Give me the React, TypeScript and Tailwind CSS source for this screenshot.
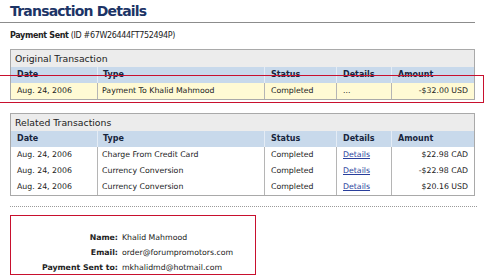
const font = { fontFamily: '"DejaVu Sans", Verdana, sans-serif' };

type Row = { date: string; type: string; status: string; details: string; amount: string; link?: boolean };

const original: Row[] = [
    { date: 'Aug. 24, 2006', type: 'Payment To Khalid Mahmood', status: 'Completed', details: '...', amount: '-$32.00 USD' },
];

const related: Row[] = [
    { date: 'Aug. 24, 2006', type: 'Charge From Credit Card', status: 'Completed', details: 'Details', amount: '$22.98 CAD', link: true },
    { date: 'Aug. 24, 2006', type: 'Currency Conversion', status: 'Completed', details: 'Details', amount: '-$22.98 CAD', link: true },
    { date: 'Aug. 24, 2006', type: 'Currency Conversion', status: 'Completed', details: 'Details', amount: '$20.16 USD', link: true },
];

const grid = 'grid grid-cols-[87px_167px_72px_55px_82px]';

function TxTable(props: { title: string; rows: Row[]; rowBg: string }) {
    return (
        <div className="ml-[10px] w-[465px] border border-[#a9a9a9]">
            <div className="h-[17px] bg-[#ececec] pl-[4px] text-[9.3px] leading-[17px] text-[#222]">{props.title}</div>
            <div className={`${grid} h-[16px] bg-[#c8d9eb] text-[8px] font-bold leading-[16px] text-[#17253d]`}>
                <div className="border-r border-[#e4ecf5] pl-[6px]">Date</div>
                <div className="border-r border-[#e4ecf5] pl-[5px]">Type</div>
                <div className="border-r border-[#e4ecf5] pl-[6px]">Status</div>
                <div className="border-r border-[#e4ecf5] pl-[6px]">Details</div>
                <div className="pl-[6px]">Amount</div>
            </div>
            {props.rows.map((r, i) => (
                <div key={i} className={`${grid} h-[16px] text-[7.8px] leading-[16px] text-[#222] ${props.rowBg}`}>
                    <div className="border-r border-[#b5b5b5] pl-[6px]">{r.date}</div>
                    <div className="border-r border-[#b5b5b5] pl-[4px]">{r.type}</div>
                    <div className="border-r border-[#b5b5b5] pl-[6px]">{r.status}</div>
                    <div className="border-r border-[#b5b5b5] pl-[6px]">
                        {r.link ? <span className="text-[#2a3f9c] underline">{r.details}</span> : r.details}
                    </div>
                    <div className="pr-[6px] text-right">{r.amount}</div>
                </div>
            ))}
        </div>
    );
}

export default function App() {
    return (
        <div className="relative h-[280px] w-[489px] overflow-hidden bg-white" style={font}>
            <h1 className="h-[22px] pl-[10px] pt-[1px] text-[14px] font-bold leading-[20px] tracking-[-0.8px] text-[#1c3466]">
                Transaction Details
            </h1>
            <div className="h-px w-[475px] bg-[#8c8c8c]" />
            <div className="mt-[8px] pl-[10px] text-[8px] leading-[10px] tracking-[-0.35px] text-[#222]">
                <span className="font-bold">Payment Sent</span> (ID #67W26444FT752494P)
            </div>
            <div className="mt-[8px]">
                <TxTable title="Original Transaction" rows={original} rowBg="bg-[#fffad4]" />
            </div>
            <div className="mt-[13px]">
                <TxTable title="Related Transactions" rows={related} rowBg="bg-white" />
            </div>
            <div className="ml-[10px] mt-[10px] w-[467px] border-t border-dotted border-[#9a9a9a]" />
            <div className="ml-[10px] mt-[8px] h-[60px] w-[246px] border border-[#c8102e] pt-[14px] text-[7.8px] leading-[15px] text-[#222]">
                <div className="grid grid-cols-[107px_1fr] gap-x-[4px]">
                    <div className="text-right font-bold">Name:</div>
                    <div>Khalid Mahmood</div>
                    <div className="text-right font-bold">Email:</div>
                    <div>order@forumpromotors.com</div>
                    <div className="text-right font-bold">Payment Sent to:</div>
                    <div>mkhalidmd@hotmail.com</div>
                </div>
            </div>
            {/* red highlight around the original transaction row */}
            <div className="absolute left-[-2px] top-[75px] h-[28px] w-[486px] border border-[#c8102e]" />
        </div>
    );
}
